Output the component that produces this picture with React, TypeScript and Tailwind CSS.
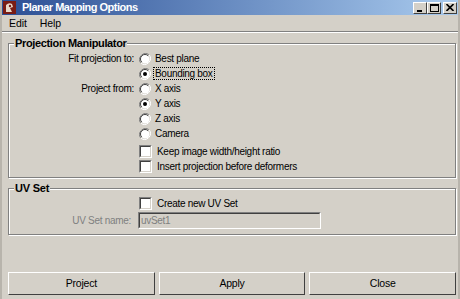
import React from 'react';

const font = { fontFamily: '"Liberation Sans", Arial, sans-serif' };

const Radio: React.FC<{ checked?: boolean }> = ({ checked }) => (
  <svg width="12" height="12" viewBox="0 0 12 12" className="shrink-0">
    <path d="M10.2 1.8 A6 6 0 0 0 1.8 10.2" fill="none" stroke="#808080" strokeWidth="1" />
    <path d="M1.8 10.2 A6 6 0 0 0 10.2 1.8" fill="none" stroke="#ffffff" strokeWidth="1" />
    <circle cx="6" cy="6" r="4.5" fill="#ffffff" />
    <path d="M9.2 2.8 A4.5 4.5 0 0 0 2.8 9.2" fill="none" stroke="#404040" strokeWidth="1" />
    {checked && <circle cx="6" cy="6" r="2" fill="#000000" />}
  </svg>
);

const Check: React.FC = () => (
  <div className="w-[13px] h-[13px] shrink-0 border border-t-[#808080] border-l-[#808080] border-b-white border-r-white">
    <div className="w-full h-full bg-white border border-t-[#404040] border-l-[#404040] border-b-[#d4d0c8] border-r-[#d4d0c8]" />
  </div>
);

const RadioRow: React.FC<{ label?: string; text: string; checked?: boolean; focus?: boolean }> = ({ label, text, checked, focus }) => (
  <div className="flex items-center h-[15px]">
    <div className="w-[127px] text-right pr-[2px]">{label}</div>
    <div className="ml-[3px]"><Radio checked={checked} /></div>
    <span className={focus ? 'ml-[2px] px-[1px] leading-[11px] border border-dotted border-black' : 'ml-[4px]'}>{text}</span>
  </div>
);

const CheckRow: React.FC<{ text: string }> = ({ text }) => (
  <div className="flex items-center h-[15px] pl-[130px]">
    <Check />
    <span className="ml-[5px]">{text}</span>
  </div>
);

const WinBtn: React.FC<{ children: React.ReactNode; className?: string }> = ({ children, className }) => (
  <div className={`w-[14px] h-[12px] bg-[#d4d0c8] border border-t-white border-l-white border-b-[#404040] border-r-[#404040] flex items-center justify-center ${className ?? ''}`}>
    {children}
  </div>
);

const Button: React.FC<{ text: string }> = ({ text }) => (
  <button className="flex-1 h-[23px] bg-[#d4d0c8] border border-t-white border-l-white border-b-[#404040] border-r-[#404040] text-[10.5px] tracking-[-0.2px] text-black">
    {text}
  </button>
);

const App: React.FC = () => {
  return (
    <div style={font} className="w-[460px] h-[299px] bg-[#d4d0c8] text-[10px] tracking-[-0.3px] text-black flex flex-col overflow-hidden border-l-2 border-l-[#b8b4ac] border-r-2 border-r-[#b8b4ac]">
      {/* title bar */}
      <div className="h-[15px] flex items-center bg-gradient-to-r from-[#2d4f94] to-[#aacbee] pl-[1px]">
        <svg width="13" height="13" viewBox="0 0 13 13" className="shrink-0">
          <rect width="13" height="13" fill="#7a1c14" />
          <path d="M3 11 L3 4 Q6 1 9 3 L10 6 L7 7 L9 11 Z" fill="#e8d8c8" />
          <circle cx="7" cy="5" r="1.2" fill="#7a1c14" />
        </svg>
        <span className="ml-[6px] text-white font-bold text-[11px] tracking-[-0.5px]">Planar Mapping Options</span>
        <div className="ml-auto flex items-center mr-[1px]">
          <WinBtn>
            <svg width="8" height="8" viewBox="0 0 8 8"><rect x="1" y="6" width="5" height="2" fill="#000" /></svg>
          </WinBtn>
          <WinBtn>
            <svg width="9" height="8" viewBox="0 0 9 8"><rect x="0.5" y="0.5" width="8" height="7" fill="none" stroke="#000" /><rect x="0" y="0" width="9" height="2" fill="#000" /></svg>
          </WinBtn>
          <WinBtn className="ml-[2px]">
            <svg width="8" height="7" viewBox="0 0 8 7"><path d="M0.5 0 L7.5 7 M7.5 0 L0.5 7" stroke="#000" strokeWidth="1.6" /></svg>
          </WinBtn>
        </div>
      </div>

      {/* menu */}
      <div className="h-[15px] flex items-center gap-[13px] pl-[7px] pt-[3px] text-[10.5px] tracking-[-0.1px]">
        <span>Edit</span>
        <span>Help</span>
      </div>
      <div className="mt-[1px] h-[2px] border-t border-t-[#808080] border-b border-b-white" />

      {/* projection manipulator */}
      <fieldset className="mt-[4px] ml-[6px] mr-[2px] border border-[#808080] shadow-[inset_1px_1px_0_#fff,1px_1px_0_#fff] pb-[3px]">
        <legend className="ml-[5px] px-[1px] bg-[#d4d0c8] font-bold text-[11px] leading-[12px] tracking-[-0.35px]">Projection Manipulator</legend>
        <div className="pt-[2px]">
          <RadioRow label="Fit projection to:" text="Best plane" />
          <RadioRow text="Bounding box" checked focus />
          <RadioRow label="Project from:" text="X axis" />
          <RadioRow text="Y axis" checked />
          <RadioRow text="Z axis" />
          <RadioRow text="Camera" />
          <div className="h-[3px]" />
          <CheckRow text="Keep image width/height ratio" />
          <CheckRow text="Insert projection before deformers" />
        </div>
      </fieldset>

      {/* uv set */}
      <fieldset className="mt-[4px] ml-[6px] mr-[2px] border border-[#808080] shadow-[inset_1px_1px_0_#fff,1px_1px_0_#fff] pb-[5px]">
        <legend className="ml-[5px] px-[1px] bg-[#d4d0c8] font-bold text-[11px] leading-[12px] tracking-[-0.2px]">UV Set</legend>
        <div className="pt-[2px]">
          <CheckRow text="Create new UV Set" />
          <div className="flex items-center h-[17px] mt-[1px]">
            <div className="w-[122px] text-right text-[#808080]">UV Set name:</div>
            <div className="ml-[7px] w-[183px] h-[17px] border border-t-[#808080] border-l-[#808080] border-b-white border-r-white">
              <div className="w-full h-full border border-t-[#404040] border-l-[#404040] border-b-[#d4d0c8] border-r-[#d4d0c8] flex items-center pl-[1px] text-[#808080]">
                uvSet1
              </div>
            </div>
          </div>
        </div>
      </fieldset>

      <div className="flex-1" />

      {/* buttons */}
      <div className="flex gap-[4px] pl-[6px] pr-[2px] pb-[4px]">
        <Button text="Project" />
        <Button text="Apply" />
        <Button text="Close" />
      </div>
    </div>
  );
};

export default App;
